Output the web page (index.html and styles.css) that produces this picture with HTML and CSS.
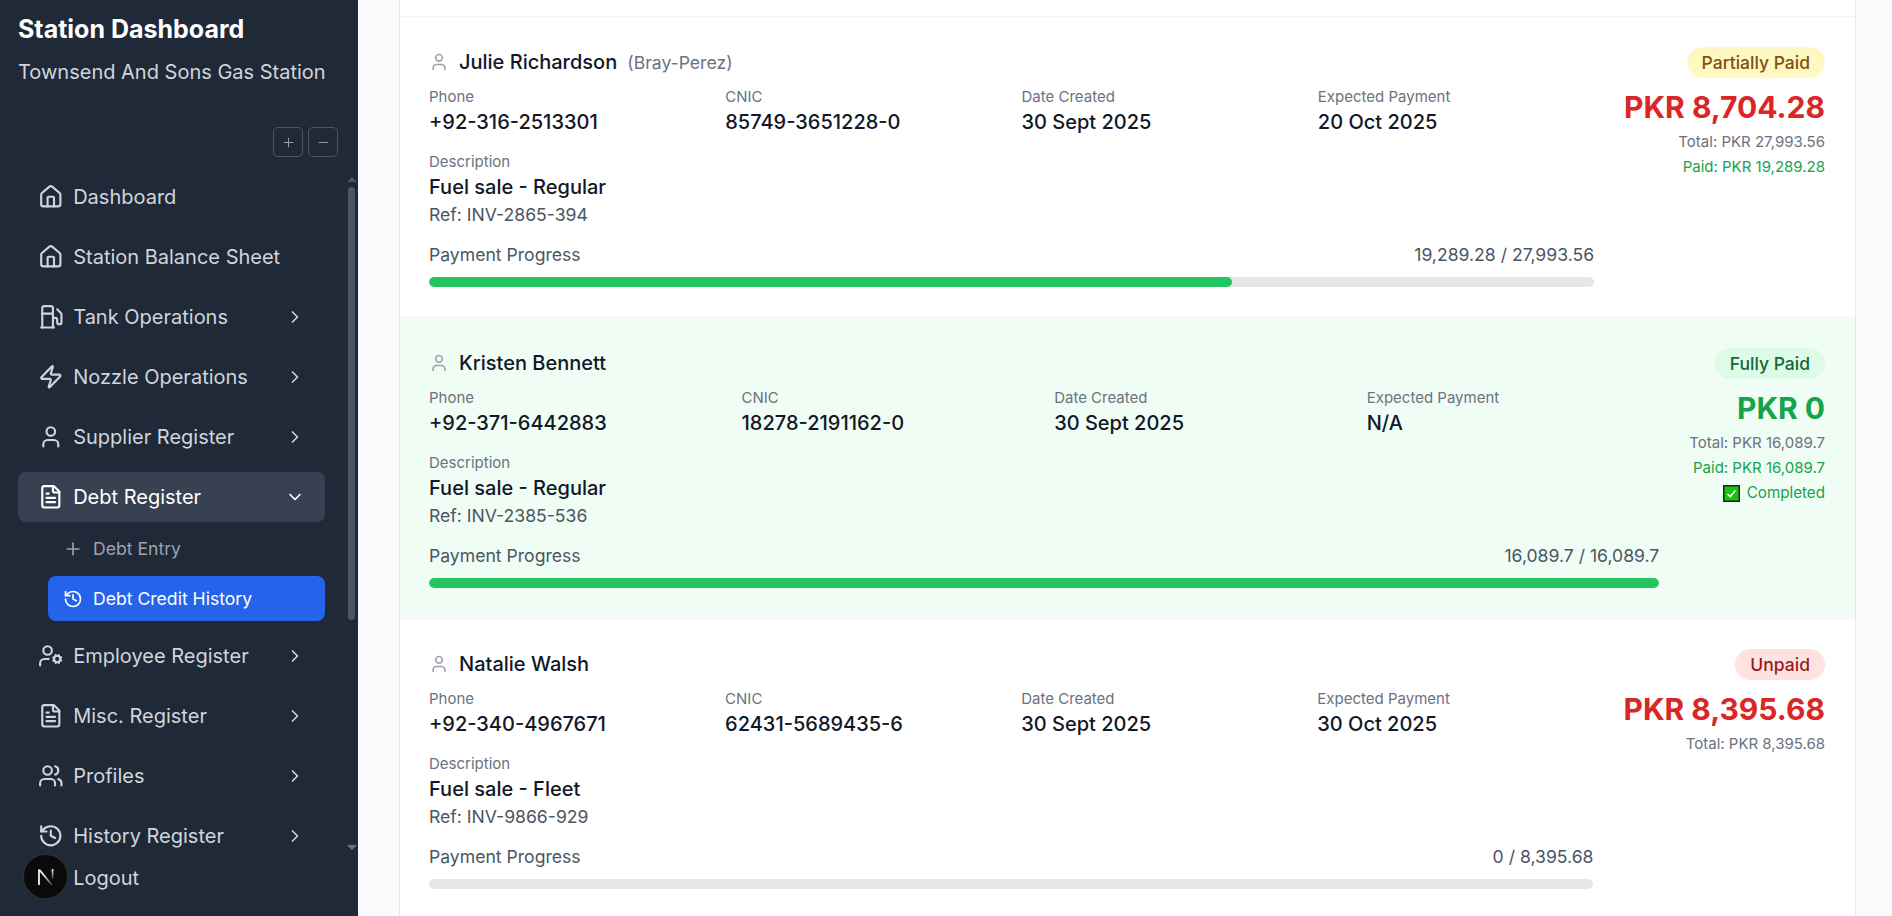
FILE: index.html
```html
<!DOCTYPE html>
<html lang="en">
<head>
    <meta charset="UTF-8">
    <meta name="viewport" content="width=device-width, initial-scale=1.0">
    <title>Station Dashboard - Debt Credit History</title>
    <link rel="stylesheet" href="styles.css">
</head>
<body>
    <svg class="icon-defs" aria-hidden="true">
        <symbol id="i-house" viewBox="0 0 24 24"><path d="M15 21v-8a1 1 0 0 0-1-1h-4a1 1 0 0 0-1 1v8"/><path d="M3 10a2 2 0 0 1 .709-1.528l7-5.999a2 2 0 0 1 2.582 0l7 5.999A2 2 0 0 1 21 10v9a2 2 0 0 1-2 2H5a2 2 0 0 1-2-2z"/></symbol>
        <symbol id="i-fuel" viewBox="0 0 24 24"><line x1="3" x2="15" y1="22" y2="22"/><line x1="4" x2="14" y1="9" y2="9"/><path d="M14 22V4a2 2 0 0 0-2-2H6a2 2 0 0 0-2 2v18"/><path d="M14 13h2a2 2 0 0 1 2 2v2a2 2 0 0 0 2 2a2 2 0 0 0 2-2V9.83a2 2 0 0 0-.59-1.42L18 5"/></symbol>
        <symbol id="i-zap" viewBox="0 0 24 24"><path d="M4 14a1 1 0 0 1-.78-1.63l9.9-10.2a.5.5 0 0 1 .86.46l-1.92 6.02A1 1 0 0 0 13 10h7a1 1 0 0 1 .78 1.63l-9.9 10.2a.5.5 0 0 1-.86-.46l1.92-6.02A1 1 0 0 0 11 14z"/></symbol>
        <symbol id="i-user" viewBox="0 0 24 24"><path d="M19 21v-2a4 4 0 0 0-4-4H9a4 4 0 0 0-4 4v2"/><circle cx="12" cy="7" r="4"/></symbol>
        <symbol id="i-file" viewBox="0 0 24 24"><path d="M15 2H6a2 2 0 0 0-2 2v16a2 2 0 0 0 2 2h12a2 2 0 0 0 2-2V7Z"/><path d="M14 2v4a2 2 0 0 0 2 2h4"/><path d="M10 9H8"/><path d="M16 13H8"/><path d="M16 17H8"/></symbol>
        <symbol id="i-history" viewBox="0 0 24 24"><path d="M3 12a9 9 0 1 0 9-9 9.75 9.75 0 0 0-6.74 2.74L3 8"/><path d="M3 3v5h5"/><path d="M12 7v5l4 2"/></symbol>
        <symbol id="i-user-cog" viewBox="0 0 24 24"><circle cx="18" cy="15" r="3"/><circle cx="9" cy="7" r="4"/><path d="M10 15H6a4 4 0 0 0-4 4v2"/><path d="m21.7 16.4-.9-.3"/><path d="m15.2 13.9-.9-.3"/><path d="m16.6 18.7.3-.9"/><path d="m19.1 12.2.3-.9"/><path d="m19.6 18.7-.4-1"/><path d="m16.8 12.3-.4-1"/><path d="m14.3 16.6 1-.4"/><path d="m20.7 13.8 1-.4"/></symbol>
        <symbol id="i-users" viewBox="0 0 24 24"><path d="M16 21v-2a4 4 0 0 0-4-4H6a4 4 0 0 0-4 4v2"/><circle cx="9" cy="7" r="4"/><path d="M22 21v-2a4 4 0 0 0-3-3.87"/><path d="M16 3.13a4 4 0 0 1 0 7.75"/></symbol>
        <symbol id="i-logout" viewBox="0 0 24 24"><path d="M9 21H5a2 2 0 0 1-2-2V5a2 2 0 0 1 2-2h4"/><path d="m16 17 5-5-5-5"/><path d="M21 12H9"/></symbol>
        <symbol id="i-plus" viewBox="0 0 24 24"><path d="M5 12h14"/><path d="M12 5v14"/></symbol>
        <symbol id="i-minus" viewBox="0 0 24 24"><path d="M5 12h14"/></symbol>
        <symbol id="i-right" viewBox="0 0 24 24"><path d="m9 18 6-6-6-6"/></symbol>
        <symbol id="i-down" viewBox="0 0 24 24"><path d="m6 9 6 6 6-6"/></symbol>
    </svg>

    <div class="app">
        <aside class="sidebar">
            <div class="brand">
                <div class="brand-title">Station Dashboard</div>
                <div class="brand-sub">Townsend And Sons Gas Station</div>
            </div>
            <div class="tree-btns">
                <button class="tree-btn"><svg class="icon"><use href="#i-plus"/></svg></button>
                <button class="tree-btn"><svg class="icon"><use href="#i-minus"/></svg></button>
            </div>
            <nav class="nav">
                <a class="nav-item"><svg class="icon"><use href="#i-house"/></svg><span>Dashboard</span></a>
                <a class="nav-item"><svg class="icon"><use href="#i-house"/></svg><span>Station Balance Sheet</span></a>
                <a class="nav-item"><svg class="icon"><use href="#i-fuel"/></svg><span>Tank Operations</span><svg class="chev"><use href="#i-right"/></svg></a>
                <a class="nav-item"><svg class="icon"><use href="#i-zap"/></svg><span>Nozzle Operations</span><svg class="chev"><use href="#i-right"/></svg></a>
                <a class="nav-item"><svg class="icon"><use href="#i-user"/></svg><span>Supplier Register</span><svg class="chev"><use href="#i-right"/></svg></a>
                <a class="nav-item open"><svg class="icon"><use href="#i-file"/></svg><span>Debt Register</span><svg class="chev"><use href="#i-down"/></svg></a>
                <div class="subnav">
                    <a class="sub-item"><svg class="icon"><use href="#i-plus"/></svg><span>Debt Entry</span></a>
                    <a class="sub-item current"><svg class="icon"><use href="#i-history"/></svg><span>Debt Credit History</span></a>
                </div>
                <a class="nav-item"><svg class="icon"><use href="#i-user-cog"/></svg><span>Employee Register</span><svg class="chev"><use href="#i-right"/></svg></a>
                <a class="nav-item"><svg class="icon"><use href="#i-file"/></svg><span>Misc. Register</span><svg class="chev"><use href="#i-right"/></svg></a>
                <a class="nav-item"><svg class="icon"><use href="#i-users"/></svg><span>Profiles</span><svg class="chev"><use href="#i-right"/></svg></a>
                <a class="nav-item"><svg class="icon"><use href="#i-history"/></svg><span>History Register</span><svg class="chev"><use href="#i-right"/></svg></a>
            </nav>
            <a class="nav-item logout"><svg class="icon"><use href="#i-logout"/></svg><span>Logout</span></a>

            <div class="scroll-up"></div>
            <div class="scroll-thumb"></div>
            <div class="scroll-down"></div>
            <div class="next-badge">
                <svg viewBox="0 0 18 18" width="18" height="18">
                    <defs>
                        <linearGradient id="next-fade" x1="0" y1="0" x2="0" y2="1"><stop offset="0" stop-color="#fff"/><stop offset="1" stop-color="#fff" stop-opacity="0.15"/></linearGradient>
                        <linearGradient id="next-diag" gradientUnits="userSpaceOnUse" x1="6" y1="6" x2="15" y2="17"><stop offset="0" stop-color="#fff"/><stop offset="1" stop-color="#fff" stop-opacity="0.2"/></linearGradient>
                    </defs>
                    <path d="M2 17V1.5" class="next-stem"/>
                    <path d="M2.3 1.7L15 17" class="next-slash"/>
                    <rect x="14.7" y="1" width="1.7" height="10" fill="url(#next-fade)"/>
                </svg>
            </div>
        </aside>

        <main class="main">
            <div class="debt-card">
                <div class="row-stub"></div>

                <div class="debt-row">
                    <div class="debt-left">
                        <div class="debt-name">
                            <svg class="person"><use href="#i-user"/></svg>
                            <span class="name">Julie Richardson</span>
                            <span class="company">(Bray-Perez)</span>
                        </div>
                        <div class="debt-grid">
                            <div><div class="label">Phone</div><div class="value">+92-316-2513301</div></div>
                            <div><div class="label">CNIC</div><div class="value">85749-3651228-0</div></div>
                            <div><div class="label">Date Created</div><div class="value">30 Sept 2025</div></div>
                            <div><div class="label">Expected Payment</div><div class="value">20 Oct 2025</div></div>
                        </div>
                        <div class="debt-desc">
                            <div class="label">Description</div>
                            <div class="value">Fuel sale - Regular</div>
                            <div class="ref">Ref: INV-2865-394</div>
                        </div>
                        <div class="progress-head"><span>Payment Progress</span><span>19,289.28 / 27,993.56</span></div>
                        <div class="progress"><div class="progress-fill" style="width: 68.9%"></div></div>
                    </div>
                    <div class="debt-right">
                        <span class="badge partial">Partially Paid</span>
                        <div class="amount red">PKR 8,704.28</div>
                        <div class="total">Total: PKR 27,993.56</div>
                        <div class="paid">Paid: PKR 19,289.28</div>
                    </div>
                </div>

                <div class="debt-row settled">
                    <div class="debt-left">
                        <div class="debt-name">
                            <svg class="person"><use href="#i-user"/></svg>
                            <span class="name">Kristen Bennett</span>
                        </div>
                        <div class="debt-grid">
                            <div><div class="label">Phone</div><div class="value">+92-371-6442883</div></div>
                            <div><div class="label">CNIC</div><div class="value">18278-2191162-0</div></div>
                            <div><div class="label">Date Created</div><div class="value">30 Sept 2025</div></div>
                            <div><div class="label">Expected Payment</div><div class="value">N/A</div></div>
                        </div>
                        <div class="debt-desc">
                            <div class="label">Description</div>
                            <div class="value">Fuel sale - Regular</div>
                            <div class="ref">Ref: INV-2385-536</div>
                        </div>
                        <div class="progress-head"><span>Payment Progress</span><span>16,089.7 / 16,089.7</span></div>
                        <div class="progress"><div class="progress-fill" style="width: 100%"></div></div>
                    </div>
                    <div class="debt-right">
                        <span class="badge full">Fully Paid</span>
                        <div class="amount green">PKR 0</div>
                        <div class="total">Total: PKR 16,089.7</div>
                        <div class="paid">Paid: PKR 16,089.7</div>
                        <div class="paid done">
                            <svg class="check" viewBox="0 0 17 17"><rect x="0.75" y="0.75" width="15.5" height="15.5" fill="#16c60c" stroke="#222" stroke-width="1.5"/><path d="M4.5 9l2.8 2.6 5-6" fill="none" stroke="#fff" stroke-width="1.6"/></svg>
                            <span>Completed</span>
                        </div>
                    </div>
                </div>

                <div class="debt-row">
                    <div class="debt-left">
                        <div class="debt-name">
                            <svg class="person"><use href="#i-user"/></svg>
                            <span class="name">Natalie Walsh</span>
                        </div>
                        <div class="debt-grid">
                            <div><div class="label">Phone</div><div class="value">+92-340-4967671</div></div>
                            <div><div class="label">CNIC</div><div class="value">62431-5689435-6</div></div>
                            <div><div class="label">Date Created</div><div class="value">30 Sept 2025</div></div>
                            <div><div class="label">Expected Payment</div><div class="value">30 Oct 2025</div></div>
                        </div>
                        <div class="debt-desc">
                            <div class="label">Description</div>
                            <div class="value">Fuel sale - Fleet</div>
                            <div class="ref">Ref: INV-9866-929</div>
                        </div>
                        <div class="progress-head"><span>Payment Progress</span><span>0 / 8,395.68</span></div>
                        <div class="progress"><div class="progress-fill" style="width: 0%"></div></div>
                    </div>
                    <div class="debt-right">
                        <span class="badge unpaid">Unpaid</span>
                        <div class="amount red">PKR 8,395.68</div>
                        <div class="total">Total: PKR 8,395.68</div>
                    </div>
                </div>
            </div>
        </main>
    </div>
</body>
</html>
```

FILE: styles.css
```css
* { box-sizing: border-box; }
html, body { height: 100%; }
body { margin: 0; font-family: Inter, "Noto Sans", sans-serif; background: #f9fafb; color: #111827; overflow: hidden; }
.icon-defs { display: none; }
.app { display: flex; height: 916px; }

/* sidebar */
.sidebar { position: relative; width: 358px; flex: none; background: #1f2937; display: flex; flex-direction: column; color: #d1d5db; }
.brand { padding: 13px 18px 0; }
.brand-title { font-size: 25px; line-height: 32px; font-weight: 700; color: #fff; }
.brand-sub { margin-top: 13px; font-size: 20px; line-height: 28px; color: #d1d5db; white-space: nowrap; }
.tree-btns { display: flex; justify-content: flex-end; gap: 5px; padding-right: 20px; margin-top: 41px; }
.tree-btn { width: 30px; height: 30px; padding: 0; display: flex; align-items: center; justify-content: center; background: none; border: 1px solid #4b5563; border-radius: 5px; color: #9ca3af; }
.tree-btn .icon { width: 15px; height: 15px; stroke-width: 1.5; }
.nav { flex: 1; min-height: 0; margin-top: 15px; padding: 0 33px 0 18px; overflow: hidden; display: flex; flex-direction: column; gap: 10px; }
.nav-item { flex: none; height: 50px; padding: 0 20px; display: flex; align-items: center; gap: 9.6px; border-radius: 8px; font-size: 20px; color: #d1d5db; }
.nav-item span { flex: 1; white-space: nowrap; }
.icon { width: 25.6px; height: 25.6px; flex: none; fill: none; stroke: currentColor; stroke-width: 2; stroke-linecap: round; stroke-linejoin: round; }
.chev { width: 20px; height: 20px; flex: none; fill: none; stroke: currentColor; stroke-width: 2; stroke-linecap: round; stroke-linejoin: round; }
.nav-item.open { background: #374151; color: #fff; }
.subnav { display: flex; flex-direction: column; padding-left: 30px; margin-top: -6px; gap: 5px; }
.sub-item { height: 45px; padding: 0 16px 0 15px; display: flex; align-items: center; gap: 10px; border-radius: 8px; font-size: 17.6px; color: #9ca3af; }
.sub-item .icon { width: 20px; height: 20px; }
.sub-item.current { background: #2563eb; color: #fff; }
.logout { margin: 0 33px 13px 18px; }
.scroll-thumb { position: absolute; left: 348px; top: 187px; width: 7px; height: 433px; background: #4b5563; border-radius: 4px; }
.scroll-up, .scroll-down { position: absolute; left: 347px; width: 0; height: 0; border-left: 5px solid transparent; border-right: 5px solid transparent; }
.scroll-up { top: 177px; border-bottom: 5px solid #4b5563; }
.scroll-down { top: 845px; border-top: 5px solid #6b7280; }
.next-badge { position: absolute; left: 22px; top: 853px; width: 47px; height: 47px; border-radius: 50%; background: #0a0a0a; border: 2px solid #2a2c30; display: flex; align-items: center; justify-content: center; }
.next-stem { fill: none; stroke: #fff; stroke-width: 1.7; }
.next-slash { fill: none; stroke: url(#next-diag); stroke-width: 1.8; }

/* debt list */
.main { flex: 1; min-width: 0; padding: 0 36px 0 41px; overflow: hidden; }
.debt-card { background: #fff; border-left: 1px solid #e5e7eb; border-right: 1px solid #e5e7eb; }
.row-stub { height: 16px; }
.debt-row { display: flex; gap: 30px; height: 301px; padding: 30px 30px 30px 29px; border-top: 1px solid #f3f4f6; }
.debt-row.settled { background: #f0fdf4; }
.debt-left { flex: 1; min-width: 0; padding-top: 1px; }
.debt-name { display: flex; align-items: center; height: 28px; margin-bottom: 11px; }
.person { width: 20px; height: 20px; margin-right: 10px; fill: none; stroke: #9ca3af; stroke-width: 2; stroke-linecap: round; stroke-linejoin: round; }
.name { font-size: 20px; font-weight: 500; }
.company { margin-left: 10px; font-size: 17.6px; color: #6b7280; }
.debt-grid { display: grid; grid-template-columns: repeat(4, 1fr); gap: 20px; }
.label { font-size: 15px; line-height: 20px; color: #6b7280; }
.value { margin-top: 1px; font-size: 20px; line-height: 28px; font-weight: 500; }
.debt-desc { margin-top: 16px; }
.ref { margin-top: 2px; font-size: 17.6px; line-height: 24px; color: #4b5563; }
.progress-head { display: flex; justify-content: space-between; margin-top: 16px; font-size: 17.6px; line-height: 24px; color: #4b5563; }
.progress { height: 10px; margin-top: 10px; background: #e5e7eb; border-radius: 5px; overflow: hidden; }
.progress-fill { height: 100%; background: #22c55e; border-radius: 5px; }
.debt-right { flex: none; display: flex; flex-direction: column; align-items: flex-end; }
.badge { height: 31px; padding: 0 15px; display: flex; align-items: center; border-radius: 16px; font-size: 17.5px; font-weight: 500; }
.badge.partial { background: #fef9c3; color: #854d0e; }
.badge.full { background: #dcfce7; color: #166534; }
.badge.unpaid { background: #fee2e2; color: #991b1b; }
.amount { margin-top: 11px; font-size: 30px; line-height: 36px; font-weight: 700; }
.amount.red { color: #dc2626; }
.amount.green { color: #16a34a; }
.total { margin-top: 7px; font-size: 15px; line-height: 20px; color: #6b7280; }
.paid { margin-top: 5px; font-size: 15px; line-height: 20px; color: #16a34a; }
.done { display: flex; align-items: center; gap: 7px; font-size: 15.2px; }
.check { width: 17px; height: 17px; }
```
